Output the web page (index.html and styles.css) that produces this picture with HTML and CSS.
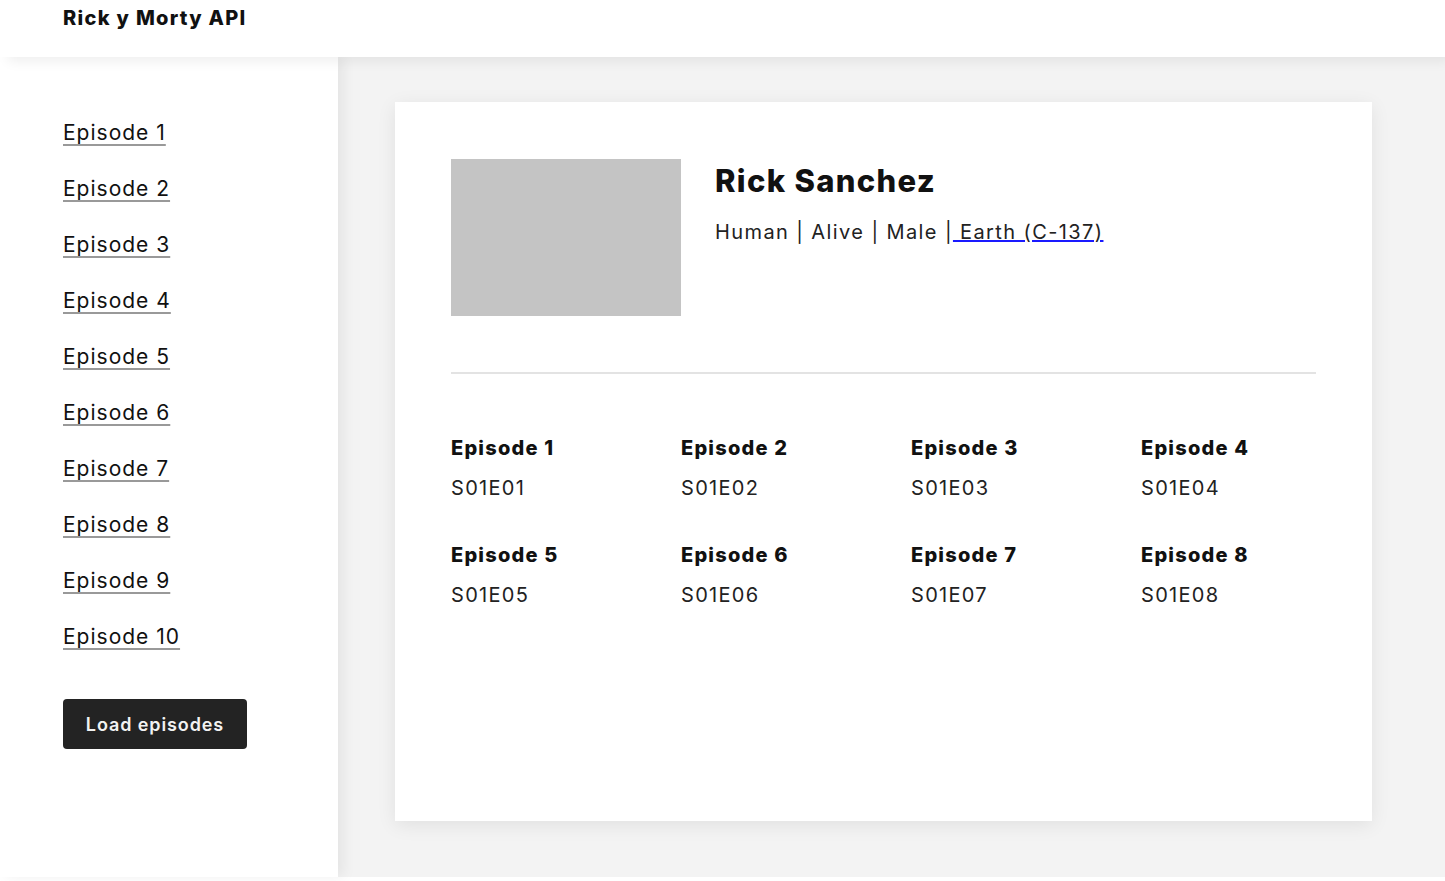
FILE: index.html
```html
<!DOCTYPE html>
<html lang="es">
<head>
<meta charset="utf-8">
<title>Rick y Morty API</title>
<link rel="stylesheet" href="styles.css">
</head>
<body>
<header class="topbar">
  <h1 class="brand">Rick y Morty API</h1>
</header>
<div class="layout">
  <aside class="sidebar">
    <ul class="ep-links">
      <li><a href="#">Episode 1</a></li>
      <li><a href="#">Episode 2</a></li>
      <li><a href="#">Episode 3</a></li>
      <li><a href="#">Episode 4</a></li>
      <li><a href="#">Episode 5</a></li>
      <li><a href="#">Episode 6</a></li>
      <li><a href="#">Episode 7</a></li>
      <li><a href="#">Episode 8</a></li>
      <li><a href="#">Episode 9</a></li>
      <li><a href="#">Episode 10</a></li>
    </ul>
    <button class="load-btn" type="button">Load episodes</button>
  </aside>
  <main class="main">
    <section class="card">
      <div class="profile">
        <div class="avatar"></div>
        <div class="info">
          <h2 class="name">Rick Sanchez</h2>
          <p class="meta">Human | Alive | Male |<a class="origin" href="#"> Earth (C-137) </a></p>
        </div>
      </div>
      <hr class="divider">
      <div class="episodes">
        <div class="ep"><div class="ep-title">Episode 1</div><div class="ep-code">S01E01</div></div>
        <div class="ep"><div class="ep-title">Episode 2</div><div class="ep-code">S01E02</div></div>
        <div class="ep"><div class="ep-title">Episode 3</div><div class="ep-code">S01E03</div></div>
        <div class="ep"><div class="ep-title">Episode 4</div><div class="ep-code">S01E04</div></div>
        <div class="ep"><div class="ep-title">Episode 5</div><div class="ep-code">S01E05</div></div>
        <div class="ep"><div class="ep-title">Episode 6</div><div class="ep-code">S01E06</div></div>
        <div class="ep"><div class="ep-title">Episode 7</div><div class="ep-code">S01E07</div></div>
        <div class="ep"><div class="ep-title">Episode 8</div><div class="ep-code">S01E08</div></div>
      </div>
    </section>
  </main>
</div>
</body>
</html>
```
FILE: styles.css
```css
* { box-sizing: border-box; }
html, body { margin: 0; padding: 0; background: #fff; }
body {
  font-family: Inter, "Open Sans", "Liberation Sans", sans-serif;
  color: #111;
  width: 1445px;
  height: 881px;
  overflow: hidden;
}
.topbar {
  position: relative;
  z-index: 2;
  height: 57px;
  padding: 6px 0 0 63px;
  background: #fff;
  box-shadow: 6px 6px 12px -2px rgba(0,0,0,0.07);
}
.brand {
  margin: 0;
  font-size: 20px;
  line-height: 24px;
  font-weight: 800;
  letter-spacing: 1.3px;
}
.layout {
  display: grid;
  grid-template-columns: 338px minmax(0, 1fr);
  height: 820px;
}
.sidebar {
  position: relative;
  z-index: 1;
  background: #fff;
  padding: 64px 0 0 63px;
  box-shadow: 6px 0 12px rgba(0,0,0,0.06);
}
.ep-links {
  list-style: none;
  margin: 0;
  padding: 0;
  display: flex;
  flex-direction: column;
  gap: 32px;
}
.ep-links li {
  font-size: 21px;
  line-height: 24px;
  height: 24px;
}
.ep-links a {
  color: #111;
  letter-spacing: 1px;
  text-decoration: underline;
  text-decoration-color: #999;
  text-decoration-thickness: 2px;
  text-underline-offset: 4px;
}
.load-btn {
  display: block;
  margin-top: 50px;
  width: 184px;
  height: 50px;
  background: #232323;
  color: #f2f2f2;
  border: none;
  border-radius: 4px;
  font-family: inherit;
  font-size: 18px;
  font-weight: 600;
  letter-spacing: 0.9px;
}
.main {
  background: #f3f3f3;
  padding: 45px 73px 56px 57px;
  min-width: 0;
}
.card {
  background: #fff;
  height: 100%;
  padding: 57px 56px 56px;
  box-shadow: 0 4px 18px rgba(0,0,0,0.08);
}
.profile {
  display: flex;
  gap: 34px;
}
.avatar {
  width: 230px;
  height: 157px;
  background: #c4c4c4;
  flex: none;
}
.name {
  margin: 3px 0 0;
  font-size: 31px;
  line-height: 38px;
  font-weight: 800;
  letter-spacing: 1.3px;
  color: #111;
}
.meta {
  margin: 20px 0 0;
  font-size: 20px;
  line-height: 24px;
  color: #222;
  letter-spacing: 1.4px;
}
.origin {
  color: #222;
  text-decoration-color: #1a1aff;
}
.divider {
  margin: 56px 0 0;
  border: none;
  height: 2px;
  background: #e3e3e3;
}
.episodes {
  display: grid;
  grid-template-columns: 230px 230px 230px 1fr;
  row-gap: 43px;
  margin-top: 62px;
}
.ep-title {
  font-size: 20px;
  line-height: 24px;
  font-weight: 800;
  color: #111;
  letter-spacing: 1.2px;
}
.ep-code {
  margin-top: 16px;
  font-size: 20px;
  line-height: 24px;
  color: #222;
  letter-spacing: 1.3px;
}
```
